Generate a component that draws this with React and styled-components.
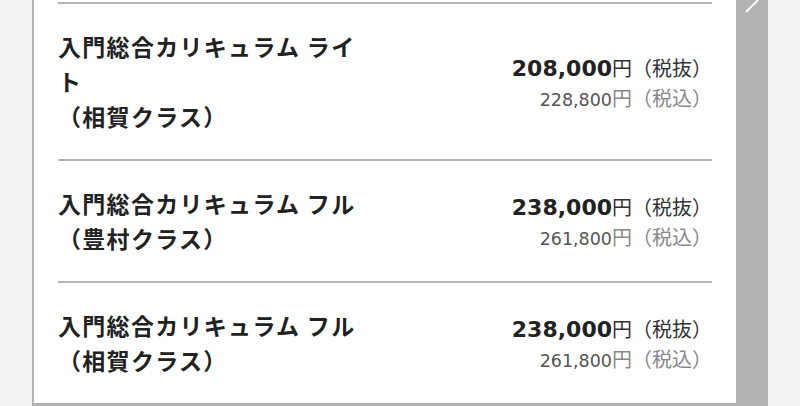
import React from "react";
import styled, { createGlobalStyle } from "styled-components";

const Global = createGlobalStyle`
  html, body { margin: 0; padding: 0; background: #f2f2f2; }
  body { font-family: "DejaVu Sans", "Noto Sans CJK JP", sans-serif; }
  #root { height: 406px; overflow: hidden; }
`;

const Page = styled.div`
  display: flex;
  height: 406px;
  padding-left: 32px;
  background: #f2f2f2;
`;

const Card = styled.div`
  width: 704px;
  box-sizing: border-box;
  align-self: flex-start;
  background: #fff;
  border-left: 2px solid #b3b3b3;
  border-bottom: 3px solid #b3b3b3;
  padding: 2px 24px 0;
`;

const Row = styled.div`
  display: flex;
  justify-content: space-between;
  align-items: center;
  border-top: 2px solid #b3b3b3;
  padding: 25px 0;
`;

const Title = styled.div`
  max-width: 310px;
  font-family: "Noto Sans CJK JP", sans-serif;
  font-weight: 700;
  font-size: 23px;
  letter-spacing: 1.3px;
  line-height: 35px;
  color: #222;
`;

const Prices = styled.div`
  text-align: right;
  flex-shrink: 0;
  padding-top: 4px;
`;

const MainPrice = styled.div`
  line-height: 28px;
  white-space: nowrap;
`;

const Amount = styled.span`
  font-family: "DejaVu Sans", sans-serif;
  font-weight: 700;
  font-size: 22px;
  color: #222;
`;

const Unit = styled.span`
  font-family: "Noto Sans CJK JP", sans-serif;
  font-size: 20px;
  color: #333;
`;

const SubPrice = styled.div`
  line-height: 26px;
  white-space: nowrap;
`;

const SubAmount = styled.span`
  font-family: "DejaVu Sans", sans-serif;
  font-size: 17.5px;
  color: #555;
`;

const SubUnit = styled.span`
  font-family: "Noto Sans CJK JP", sans-serif;
  font-size: 20px;
  color: #888;
`;

const NextStrip = styled.div`
  width: 32px;
  height: 406px;
  background: #b3b3b3;
  display: flex;
  flex-direction: column;
`;

const Chevron = styled.svg`
  display: block;
  width: 32px;
  height: 16px;
`;

const items = [
  { title: ["入門総合カリキュラム ライト", "（相賀クラス）"], price: "208,000", tax: "228,800" },
  { title: ["入門総合カリキュラム フル", "（豊村クラス）"], price: "238,000", tax: "261,800" },
  { title: ["入門総合カリキュラム フル", "（相賀クラス）"], price: "238,000", tax: "261,800" },
];

export default function App() {
  return (
    <>
      <Global />
      <Page>
        <Card>
          {items.map((it, i) => (
            <Row key={i}>
              <Title>
                {it.title[0]}
                <br />
                {it.title[1]}
              </Title>
              <Prices>
                <MainPrice>
                  <Amount>{it.price}</Amount>
                  <Unit>円（税抜）</Unit>
                </MainPrice>
                <SubPrice>
                  <SubAmount>{it.tax}</SubAmount>
                  <SubUnit>円（税込）</SubUnit>
                </SubPrice>
              </Prices>
            </Row>
          ))}
        </Card>
        <NextStrip>
          <Chevron viewBox="0 0 32 16">
            <polyline points="10,-14 23,-1 10,12" fill="none" stroke="#fff" strokeWidth="2" />
          </Chevron>
        </NextStrip>
      </Page>
    </>
  );
}
